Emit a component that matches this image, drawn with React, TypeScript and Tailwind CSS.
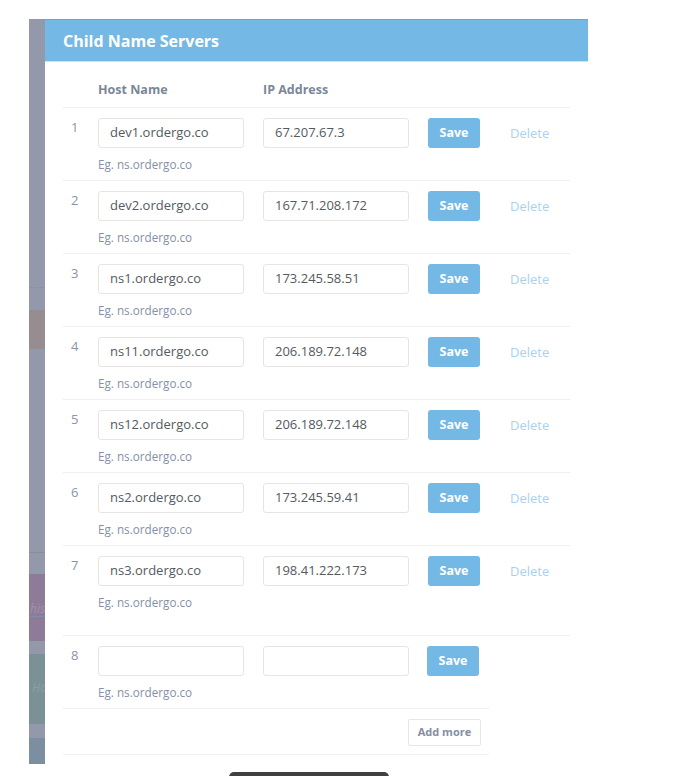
import React from "react";

const rows = [
  { host: "dev1.ordergo.co", ip: "67.207.67.3" },
  { host: "dev2.ordergo.co", ip: "167.71.208.172" },
  { host: "ns1.ordergo.co", ip: "173.245.58.51" },
  { host: "ns11.ordergo.co", ip: "206.189.72.148" },
  { host: "ns12.ordergo.co", ip: "206.189.72.148" },
  { host: "ns2.ordergo.co", ip: "173.245.59.41" },
  { host: "ns3.ordergo.co", ip: "198.41.222.173" },
];

function Input({ value }: { value: string }) {
  return (
    <div className="w-[146px] h-[30px] border border-[#e7e5e1] rounded-[3px] bg-white flex items-center pl-[11px] text-[13px] text-[#555a60]">
      {value}
    </div>
  );
}

function Row({
  n,
  host,
  ip,
  del,
  last,
}: {
  n: number;
  host: string;
  ip: string;
  del: boolean;
  last?: boolean;
}) {
  return (
    <div
      className={
        "flex border-b border-[#f0f0f0] pt-[10px] " +
        (last ? "pb-[25px]" : "pb-[8px]")
      }
    >
      <div className="w-[35px] pl-[8px] text-[13px] leading-[18px] text-[#8a94a7]">
        {n}
      </div>
      <div className="w-[165px]">
        <Input value={host} />
        <div className="mt-[8px] leading-[16px] text-[11.7px] text-[#8590a6]">
          Eg. ns.ordergo.co
        </div>
      </div>
      <div className="w-[165px]">
        <Input value={ip} />
      </div>
      <div className={del ? "w-[82px]" : "w-[52px] -ml-[1px]"}>
        <div className="w-[52px] h-[30px] rounded-[3px] bg-[#74b9e6] flex items-center justify-center text-white font-bold text-[12.5px]">
          Save
        </div>
      </div>
      {del && (
        <div className="h-[30px] pt-[1px] flex items-center text-[13px] text-[#a9d1ef]">
          Delete
        </div>
      )}
    </div>
  );
}

function Band({ h, c, children }: { h: string; c: string; children?: React.ReactNode }) {
  return <div className={h + " " + c + " overflow-hidden text-[12px] italic leading-[16px]"}>{children}</div>;
}

export default function App() {
  return (
    <div
      className="relative w-[680px] h-[776px] bg-white overflow-hidden"
      style={{ fontFamily: '"Open Sans", "Liberation Sans", sans-serif' }}
    >
      <div className="pt-[19px] pl-[29px] flex items-start">
        {/* backdrop strip */}
        <div className="w-[16px] h-[745px] flex flex-col bg-[#9399ab]">
          <Band h="h-[268px]" c="bg-[#9399ab]" />
          <Band h="h-[1px]" c="bg-[#8593b5]" />
          <Band h="h-[22px]" c="bg-[#9399ab]" />
          <Band h="h-[39px]" c="bg-[#978d90]" />
          <Band h="h-[203px]" c="bg-[#9399ab]" />
          <Band h="h-[1px]" c="bg-[#8a8c96]" />
          <Band h="h-[21px]" c="bg-[#9399ab]" />
          <Band h="h-[67px]" c="bg-[#8e7b98] pt-[28px] pl-[1px] text-[#9e92ad]">
            <div className="border-b border-[#7f8cb0] leading-[14px]">his</div>
          </Band>
          <Band h="h-[13px]" c="bg-[#9399ab]" />
          <Band h="h-[70px]" c="bg-[#7a9195] pt-[26px] pl-[3px] text-[#8aa0a6]">Ho</Band>
          <Band h="h-[14px]" c="bg-[#9399ab]" />
          <Band h="h-[26px]" c="bg-[#7b8fa0]" />
        </div>

        {/* modal */}
        <div className="w-[543px] bg-white border-t border-[#9399ab]">
          <div className="h-[42px] bg-[#74b9e6] border-b border-[#cbe4f5] flex items-center pl-[18px] text-white font-bold text-[16px]">
            Child Name Servers
          </div>
          <div className="px-[18px]">
            <div className="flex border-b border-[#f0f0f0] pt-[19px] pb-[8px] leading-[18px] text-[12.5px] font-bold text-[#7b8699]">
              <div className="w-[35px]" />
              <div className="w-[165px]">Host Name</div>
              <div>IP Address</div>
            </div>
            {rows.map((r, i) => (
              <Row
                key={i}
                n={i + 1}
                host={r.host}
                ip={r.ip}
                del
                last={i === rows.length - 1}
              />
            ))}
            <div className="w-[426px]">
              <Row n={8} host="" ip="" del={false} />
              <div className="flex justify-end border-b border-[#f0f0f0] pt-[10px] pb-[8px] pr-[8px]">
                <div className="w-[73px] h-[27px] border border-[#e6e6e6] rounded-[2px] bg-white flex items-center justify-center text-[11px] font-bold text-[#848ea2]">
                  Add more
                </div>
              </div>
            </div>
            <div className="h-[40px]" />
          </div>
        </div>
      </div>
      <div className="absolute left-[229px] top-[772px] w-[160px] h-[10px] rounded-t-[5px] bg-[#404040]" />
    </div>
  );
}
